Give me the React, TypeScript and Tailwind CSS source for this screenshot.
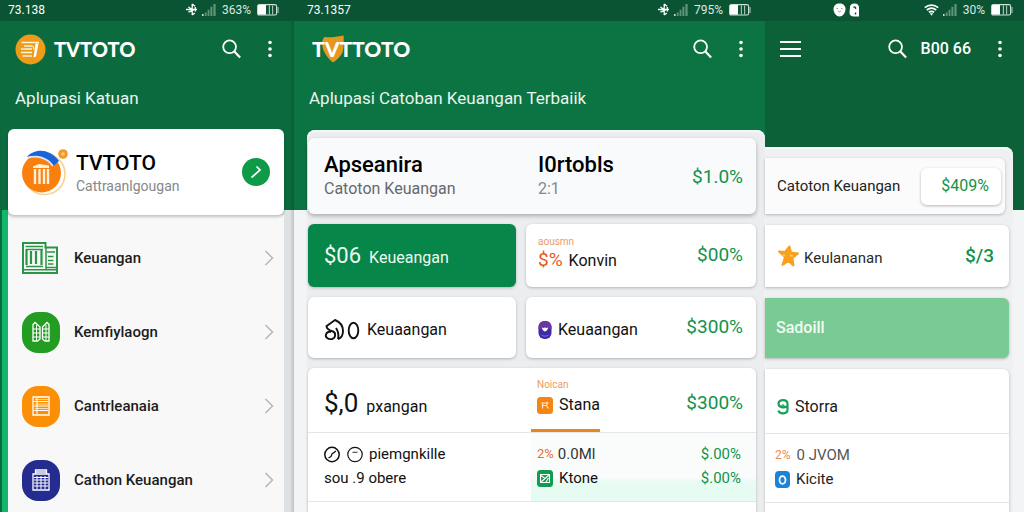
import type { ReactNode } from "react";

function Bluetooth() {
  return (
    <svg width="12" height="13" viewBox="0 0 12 13" fill="none" stroke="currentColor" strokeWidth="1.3" aria-hidden="true">
      <path d="M0 6.5h11M6.200 1v11M2.500 9.200 9.800 6M2.400 4 6.200 6.500M6.200 1l2.800 2.200M6.200 12l2.600-2M9.300 4v4.500" />
    </svg>
  );
}

function Signal() {
  return (
    <svg width="14" height="13" viewBox="0 0 14 13" aria-hidden="true">
      <path d="M0 13v-2h1.600v2z" fill="#c4dccf" />
      <path d="M2.800 13V9.400h1.800V13zM5.600 13V6.800h1.800V13zM8.400 13V3.800h2V13zM11.400 13V1h2.200v12z" fill="#5f967a" />
    </svg>
  );
}

function Battery() {
  return (
    <svg width="22" height="12" viewBox="0 0 22 12" aria-hidden="true">
      <rect x="0.600" y="0.600" width="19" height="10.400" rx="1.600" fill="none" stroke="#cfe2d7" strokeWidth="1.100" />
      <path d="M1 1h8v9.600H1z" fill="#fff" />
      <path d="M12.400 1.500v9M15.600 1.500v9M21 3v6" stroke="#a8c9b7" strokeWidth="1.100" />
    </svg>
  );
}

function Wifi() {
  return (
    <svg width="15" height="12" viewBox="0 0 15 12" fill="none" stroke="currentColor" strokeWidth="1.700" aria-hidden="true">
      <path d="M.8 3.600C4.800.3 10.200.3 14.200 3.600M2.800 6c2.800-2.200 6.600-2.200 9.400 0M4.900 8.300c1.600-1.200 3.600-1.200 5.200 0" />
      <path d="m5.700 9.300 1.800 2.400 1.800-2.400z" fill="currentColor" stroke="none" />
    </svg>
  );
}

function Notices() {
  return (
    <svg width="27" height="14" viewBox="0 0 27 14" aria-hidden="true">
      <path d="M6.500.5c3.500 0 6 2 6 5.500 0 4-3 7.500-6 7.500S.5 10 .5 6C.5 2.500 3 .5 6.500.5z" fill="#fff" />
      <path d="M5 8c1 .9 2 .9 3 0M3.500 5.500h1.500M8 5.500h1.500" stroke="#7fa791" strokeWidth="1" fill="none" />
      <path d="M17 4c0-2.200 1.800-3.500 4.500-3.500S26 2 26 4.500v9h-5c-3 0-4.500-1.500-4.500-4z" fill="#fff" />
      <path d="M20.500 4.500c1.500-1 2.500 0 2 1.500M22.500 9.500v2" stroke="#0b5131" strokeWidth="1.400" fill="none" />
    </svg>
  );
}

function SearchButton() {
  return (
    <button type="button" aria-label="Cari" className="flex text-white">
      <svg width="19" height="20" viewBox="0 0 19 20" fill="none" stroke="currentColor" strokeWidth="1.800" aria-hidden="true">
        <circle cx="7.600" cy="7.800" r="6.400" />
        <path d="m12.100 12.300 6 6.200" strokeWidth="2.200" />
      </svg>
    </button>
  );
}

function MoreButton() {
  return (
    <button type="button" aria-label="Menu lainnya" className="flex text-white">
      <svg width="6" height="18" viewBox="0 0 6 18" fill="currentColor" aria-hidden="true">
        <circle cx="3" cy="2.500" r="1.800" />
        <circle cx="3" cy="9" r="1.800" />
        <circle cx="3" cy="15.500" r="1.800" />
      </svg>
    </button>
  );
}

function StatusBar({ time, level, wifi = false }: { time: ReactNode; level: string; wifi?: boolean }) {
  return (
    <div className="flex h-[21px] shrink-0 items-center justify-between bg-[#0a5433] pb-0.5 text-[12px] text-white">
      <span>{time}</span>
      <span className="flex items-center gap-1">
        {wifi ? <Wifi /> : <Bluetooth />}
        <Signal />
        <span className="px-0.5 text-[#dbeae1]">{level}</span>
        <Battery />
      </span>
    </div>
  );
}

function Chevron() {
  return (
    <svg width="10" height="16" viewBox="0 0 10 16" fill="none" stroke="#b4b6b8" strokeWidth="1.500" aria-hidden="true">
      <path d="m1.500 1 7 7-7 7" />
    </svg>
  );
}

function LogoBadge() {
  return (
    <svg width="31" height="31" viewBox="0 0 31 31" aria-hidden="true">
      <circle cx="15.500" cy="15.500" r="15" fill="#ee9a1b" />
      <path d="M6.500 8.500h17.500M9 12h8M6 15h11M6 18.500h11M7.500 22h9.500" stroke="#fff3d8" strokeWidth="1.700" fill="none" />
      <path d="M20.500 9.500h3l-2.500 13-2.500 1z" fill="#fff" />
      <path d="M16 11.500c2.500 0 3 2 2.500 4" stroke="#fff3d8" strokeWidth="1.200" fill="none" />
    </svg>
  );
}

function AccountEmblem() {
  return (
    <svg width="46" height="47" viewBox="0 0 46 47" aria-hidden="true">
      <circle cx="22.500" cy="25" r="20.500" fill="#fff" stroke="#fbd08a" strokeWidth="1.600" />
      <circle cx="19.500" cy="24" r="19.500" fill="#fb7f0d" />
      <path d="M5 8C12-1 28-1 37 12l-6 5.500C25 9 15 5 5 8z" fill="#1d63d8" />
      <path d="M5.500 9C15 5.500 25 9 31 17" stroke="#dce9fb" strokeWidth="1.800" fill="none" />
      <path d="m11 17.500 6-2.500 10 1.500v2.500H11z" fill="#fff0d6" />
      <path d="M13 20v15M17.500 20v15M22 20v15M26 20v15" stroke="#fff0d6" strokeWidth="2.400" />
      <circle cx="41" cy="5" r="4.800" fill="#f29a23" />
      <circle cx="41" cy="5" r="1.800" fill="#fbd08a" />
    </svg>
  );
}

function LedgerIcon() {
  return (
    <svg width="36" height="32" viewBox="0 0 36 32" fill="none" stroke="#2b9447" strokeWidth="2" aria-hidden="true">
      <path d="M1 1h22.500v4.500H35V31H1z" />
      <path d="M3.500 4.500H21M4 24.500h17M1 27.800h34M24 5v22" strokeWidth="1.500" />
      <path d="M4.500 7v16M9 9v13M14 9v13M19.500 7v16" strokeWidth="2.200" />
      <path d="M4 7.500h17M25 10h8M26 14.500h5.500M26 18.500h5.500M26 22h5.500M24 25.500h10" strokeWidth="1.700" />
    </svg>
  );
}

function Tile({ className, children }: { className: string; children: ReactNode }) {
  return (
    <span className={`flex h-[41px] w-[38px] items-center justify-center rounded-[16px] ${className}`}>
      <svg width="20" height="22" viewBox="0 0 20 22" fill="none" stroke="#fff" strokeWidth="1.300" aria-hidden="true">
        {children}
      </svg>
    </span>
  );
}

function NavItem({ icon, label }: { icon: ReactNode; label: string }) {
  return (
    <li>
      <a href="#" className="flex h-[74px] items-center pr-[10px] pl-[14px]">
        <span className="flex w-[52px] shrink-0">{icon}</span>
        <span className="flex-1 text-[15px] font-medium whitespace-nowrap text-[#1c1c1c]">{label}</span>
        <Chevron />
      </a>
    </li>
  );
}

function MenuPanel() {
  return (
    <section className="flex min-w-0 flex-col bg-[linear-gradient(#0b6b3e_210px,#dfe2e4_210px)] shadow-[inset_-2px_0_3px_rgba(0,0,0,0.14)]">
      <div className="bg-[#0a5433] pr-[15px] pl-2">
        <StatusBar time="73.138" level="363%" />
      </div>
      <header className="flex h-14 items-center pr-[21px] pl-[15px]">
        <LogoBadge />
        <h1 className="ml-2 flex-1 font-['Lato',sans-serif] text-[20px] font-black text-white">TVTOTO</h1>
        <SearchButton />
        <span className="ml-[26px] flex">
          <MoreButton />
        </span>
      </header>
      <p className="h-[52px] pt-2 pl-[15px] text-[17px] leading-[26px] whitespace-nowrap text-[#e9f5ee]">Aplupasi Katuan</p>
      <div className="mr-[10px] flex flex-1 flex-col bg-[linear-gradient(90deg,#0b6b3e_2px,#12b76b_2px)] bg-[length:8px_100%] bg-[position:0_81px] bg-no-repeat pl-2">
        <div className="relative flex h-[86px] shrink-0 items-center rounded-md bg-white pr-[14px] pl-[14px] shadow-[0_2px_3px_rgba(0,0,0,0.22)]">
          <AccountEmblem />
          <div className="ml-2 flex-1">
            <h2 className="pt-1 text-[21px] leading-[24px] font-medium text-black">TVTOTO</h2>
            <p className="text-[14px] leading-[22px] text-[#85888b]">Cattraanlgougan</p>
          </div>
          <button type="button" aria-label="Buka akun" className="flex size-7 items-center justify-center rounded-full bg-[#0f9a48]">
            <svg width="12" height="14" viewBox="0 0 12 14" fill="none" stroke="#fff" strokeWidth="1.700" aria-hidden="true">
              <path d="m6.500 1.500 3.500 3.500L1.500 12.500" />
            </svg>
          </button>
        </div>
        <ul className="flex-1 bg-[#f8f8f8] pt-1.5">
          <NavItem label="Keuangan" icon={<LedgerIcon />} />
          <NavItem
            label="Kemfiylaogn"
            icon={
              <Tile className="bg-[#239c22]">
                <path d="M2 3.500 4 1.500 9 6v12l-2.500 2H2zM18 3.500 16 1.500 11.500 6v12l2.500 2h4z" />
                <path d="M2 8h7M2 12h7M2 16h7M5.500 4v16M11.500 8H18M11.500 12H18M11.500 16H18M15 4v16" strokeWidth="1" />
              </Tile>
            }
          />
          <NavItem
            label="Cantrleanaia"
            icon={
              <Tile className="bg-[#fb8f05]">
                <path d="M2 2h16v18H2z" />
                <path d="M3 6.500h14M3 11h14M3 15.500h14M6 3v16" strokeWidth="1" />
                <path d="M4 4.500h13M4 9h13M4 13.500h13" strokeWidth=".7" />
              </Tile>
            }
          />
          <NavItem
            label="Cathon Keuangan"
            icon={
              <Tile className="bg-[#242c8f]">
                <path d="M2 5h16v16H2zM4.500 5V1h11v4M4 3h12" />
                <path d="M3 8.500h14M3 11h14M3 14h14M3 17h14M6 7v13M10 7v13M14 7v13" strokeWidth="1" />
              </Tile>
            }
          />
        </ul>
      </div>
    </section>
  );
}

const card = "rounded-md bg-white shadow-[0_1px_3px_rgba(0,0,0,0.25)]";
const amount = "text-[19px] text-[#12934a]";
const split = "grid grid-cols-[218fr_230fr]";

function Keyhole() {
  return (
    <svg width="14" height="18" viewBox="0 0 14 18" aria-hidden="true">
      <rect x="0.500" width="13" height="18" rx="6" fill="#3f2aa8" />
      <path d="M.5 8V6c0-8 13-8 13 0v2z" fill="#6a35a5" />
      <path d="M4 6.500 5.500 7 7 6.500l1.500.5L10 6.500C10 9 8.500 10 7 10.500 5.500 10 4 9 4 6.500z" fill="#fff" />
      <path d="M3.500 14c2 1.500 5 1.500 7 0" stroke="#7b6bd0" fill="none" />
    </svg>
  );
}

function OrangeBadge() {
  return (
    <svg width="16" height="17" viewBox="0 0 16 17" aria-hidden="true">
      <rect width="16" height="17" rx="3.500" fill="#f58413" />
      <path d="M4.500 6h7M5.500 6v5.500M5.500 8.500h4l2 3M10 5v3" stroke="#ffe9cf" strokeWidth="1.200" fill="none" />
    </svg>
  );
}

function GreenBadge() {
  return (
    <svg width="16" height="17" viewBox="0 0 16 17" aria-hidden="true">
      <rect width="16" height="17" rx="3.500" fill="#119a50" />
      <path d="M3.500 4.500h9v8h-9zM4 12l8-7M4 5.500l4 3M9 12l2.500-4" stroke="#fff" strokeWidth="1.100" fill="none" />
    </svg>
  );
}

function KnotGlyph() {
  return (
    <svg width="36" height="24" viewBox="0 0 36 24" fill="none" stroke="#111" strokeWidth="1.900" aria-hidden="true">
      <path d="M2 8.500 11 2c5 2 8 6 8 11 0 4-2 7-5 8" />
      <path d="M2.500 8c0 3 3 4.500 6.500 5.500 3 1 3 6.500-1 7.500-4 .8-7-2-6-4.500.8-2 3-3 5-2.500M12 10c2 3 3 7 2 11" />
      <ellipse cx="29.500" cy="12.500" rx="4.800" ry="7.800" />
    </svg>
  );
}

function DialPair() {
  return (
    <svg width="40" height="17" viewBox="0 0 40 17" fill="none" stroke="#111" strokeWidth="1.500" aria-hidden="true">
      <circle cx="8" cy="8.500" r="7.200" />
      <path d="M4.500 12 7 10.500l1-2.500 4-3" strokeWidth="1.200" />
      <circle cx="31" cy="8.500" r="7.200" strokeWidth="1.200" />
      <path d="M28.500 6.500c2-1 3 .5 5-.5" strokeWidth="0.900" />
    </svg>
  );
}

function CatalogPanel() {
  return (
    <section className="flex min-w-0 flex-col bg-[linear-gradient(#0c7342_210px,#f3f4f5_210px)]">
      <div className="bg-[#0a5433] pr-[14px] pl-[13px]">
        <StatusBar time="73.1357" level="795%" />
      </div>
      <header className="flex h-14 items-center pr-[21px] pl-[18px]">
        <h2 className="relative flex-1 font-['Lato',sans-serif] text-[21px] font-black text-white">
          <svg className="absolute top-0.5 left-[9px]" width="24" height="29" viewBox="0 0 24 30" aria-hidden="true">
            <path d="M3 2C9 3 15 2 23 .5c0 6 .5 11-1 17-2 5-6 8-10 11-4-3-8-8-10-13C.5 10 0 6 3 2z" fill="#e8971d" />
          </svg>
          <span className="relative">TVTTOTO</span>
        </h2>
        <SearchButton />
        <span className="ml-[26px] flex">
          <MoreButton />
        </span>
      </header>
      <p className="h-[53px] pt-2 pl-[15px] text-[17px] leading-[26px] whitespace-nowrap text-[#e9f5ee]">
        Aplupasi Catoban Keuangan Terbaiik
      </p>
      <div className="ml-[13px] flex flex-1 flex-col gap-[10px] rounded-t-lg bg-[#ebedef] pt-2 pr-[9px] pl-px shadow-[inset_0_2px_2px_#f7f8f8]">
        <article className={`h-[76px] shrink-0 rounded-md bg-[#f9fafb] shadow-[0_2px_4px_rgba(0,0,0,0.28)] ${split}`}>
          <div className="pt-[13px] pl-4">
            <h3 className="text-[22px] leading-7 font-medium text-black">Apseanira</h3>
            <p className="text-[16px] leading-5 text-[#66696c]">Catoton Keuangan</p>
          </div>
          <div className="flex justify-between pt-[13px] pr-[13px] pl-3">
            <div>
              <h3 className="text-[22px] leading-7 font-medium text-black">I0rtobls</h3>
              <p className="text-[16px] leading-5 text-[#85888b]">2:1</p>
            </div>
            <span className={`pt-3 ${amount}`}>$1.0%</span>
          </div>
        </article>
        <div className="grid shrink-0 grid-cols-[208fr_230fr] gap-[10px]">
          <article className="flex h-[63px] items-baseline gap-2 rounded-md bg-[#07864a] pt-4 pl-4 text-[#eef9f2] shadow-[0_1px_3px_rgba(0,0,0,0.25)]">
            <span className="text-[22px] leading-8">$06</span>
            <span className="text-[16px]">Keueangan</span>
          </article>
          <article className={`flex h-[63px] items-center justify-between pr-[13px] pl-3 ${card}`}>
            <div>
              <p className="text-[10px] leading-[10px] text-[#ee9a62]">aousmn</p>
              <p className="flex items-baseline gap-1.5 text-[16px] leading-[26px] text-[#111]">
                <span className="text-[19px] text-[#e65a1c]">$%</span>
                Konvin
              </p>
            </div>
            <span className={amount}>$00%</span>
          </article>
          <article className={`flex h-[61px] items-center gap-[7px] pt-1 pl-4 text-[16px] text-[#111] ${card}`}>
            <KnotGlyph />
            <span>Keuaangan</span>
          </article>
          <article className={`flex h-[61px] items-center justify-between pr-[13px] pl-3 ${card}`}>
            <span className="flex items-center gap-1.5 pt-1 text-[16px] text-[#111]">
              <Keyhole />
              Keuaangan
            </span>
            <span className={amount}>$300%</span>
          </article>
        </div>
        <article className={`flex-1 rounded-b-none ${card}`}>
          <div className={`h-[65px] border-b border-[#e4e6e7] ${split}`}>
            <div className="flex items-baseline gap-2 pt-[19px] pl-4 text-[#111]">
              <span className="text-[26px] leading-8">$,0</span>
              <span className="text-[16px]">pxangan</span>
            </div>
            <div className="flex justify-between pr-[13px] pl-[5px]">
              <div className="flex flex-col justify-between border-b-3 border-[#e8871f] pl-1.5">
                <p className="pt-3 text-[10px] leading-[10px] text-[#ee9a62]">Noican</p>
                <p className="flex items-center gap-1.5 pb-3 text-[16px] leading-6 text-[#111]">
                  <OrangeBadge />
                  Stana
                </p>
              </div>
              <span className={`self-center pt-1.5 ${amount}`}>$300%</span>
            </div>
          </div>
          <div className={`h-[69px] border-b border-[#e4e6e7] ${split}`}>
            <div className="pt-[9px] pl-4 text-[15px] leading-6 text-[#111]">
              <p className="flex items-center gap-[5px]">
                <DialPair />
                piemgnkille
              </p>
              <p>sou .9 obere</p>
            </div>
            <div className="ml-[5px] bg-[linear-gradient(#fafcfb_44px,#e6fbf1_50px)] pt-[9px] pr-[15px] pl-1.5 text-[15px] leading-6">
              <p className="flex justify-between text-[#333]">
                <span className="flex items-center gap-1">
                  <span className="text-[13px] text-[#e6713c]">2%</span>
                  0.0Ml
                </span>
                <span className="text-[#12934a]">$.00%</span>
              </p>
              <p className="flex justify-between text-[#111]">
                <span className="flex items-center gap-1.5">
                  <GreenBadge />
                  Ktone
                </span>
                <span className="text-[#12934a]">$.00%</span>
              </p>
            </div>
          </div>
        </article>
      </div>
    </section>
  );
}

function AccountPanel() {
  return (
    <section className="flex min-w-0 flex-col bg-[linear-gradient(#0c6139_210px,#f3f4f5_210px)]">
      <div className="bg-[#0a5433] pr-[11px]">
        <StatusBar time={<span className="ml-[68px] flex"><Notices /></span>} level="30%" wifi />
      </div>
      <header className="flex h-14 items-center pr-[21px] pl-[15px] text-white">
        <button type="button" aria-label="Buka menu" className="flex">
          <svg width="21" height="18" viewBox="0 0 21 18" stroke="currentColor" strokeWidth="2" aria-hidden="true">
            <path d="M0 2h21M0 9h21M0 16h21" />
          </svg>
        </button>
        <span className="ml-auto flex">
          <SearchButton />
        </span>
        <span className="ml-[14px] text-[16px] font-medium whitespace-nowrap">B00 66</span>
        <span className="ml-[26px] flex">
          <MoreButton />
        </span>
      </header>
      <div className="mt-[70px] mr-[11px] flex flex-1 flex-col gap-[11px] rounded-tr-lg bg-[#eff0f1] pt-[11px] pr-1 shadow-[inset_0_2px_2px_#f7f8f8]">
        <article className="mr-1 flex h-14 shrink-0 items-center justify-between rounded-r-md bg-[#fbfbfb] pr-1 pl-3 shadow-[0_1px_3px_rgba(0,0,0,0.25)]">
          <span className="text-[15px] whitespace-nowrap text-[#222]">Catoton Keuangan</span>
          <button type="button" className="h-[37px] rounded-md bg-white pr-3 pl-5 text-[16px] text-[#12934a] shadow-[0_1px_3px_rgba(0,0,0,0.28)]">
            $409%
          </button>
        </article>
        <article className="flex h-[62px] shrink-0 items-center rounded-r-md bg-white pr-[15px] pl-3 shadow-[0_1px_3px_rgba(0,0,0,0.25)]">
          <svg width="23" height="22" viewBox="0 0 23 22" aria-hidden="true">
            <path
              d="M2 6.500 8 7l4.500-5.500L14 7.500l7 1-5.500 4.500 1 7.500-5-4.500-6 4 2.500-8z"
              fill="#f9a11b"
              stroke="#f9a11b"
              strokeWidth="2"
              strokeLinejoin="round"
            />
            <path d="M13 10.500l3 .5M6 10l2 .5" stroke="#fdd28a" strokeWidth="1.300" />
          </svg>
          <span className="ml-1 flex-1 pt-1 text-[15px] text-[#2a2a2a]">Keulananan</span>
          <span className="text-[19px] font-medium text-[#12934a]">$/3</span>
        </article>
        <button type="button" className="h-[60px] shrink-0 rounded-r-md bg-[#7acb93] pl-[11px] text-left text-[16px] font-medium text-[#f1fbf4] shadow-[0_1px_3px_rgba(0,0,0,0.25)]">
          Sadoill
        </button>
        <article className="flex-1 rounded-tr-md bg-white shadow-[0_1px_3px_rgba(0,0,0,0.25)]">
          <div className="flex h-[65px] items-center gap-1.5 border-b border-[#e4e6e7] pt-3 pl-3 text-[16px] text-[#1b1b1b]">
            <svg width="12" height="16" viewBox="0 0 12 16" fill="none" stroke="#17a05a" strokeWidth="2.200" aria-hidden="true">
              <path d="M1.500 11.500c1 4 9 4 9-1V5c0-5-9-5-9-.5 0 4 5 4.500 8.500 3" />
              <circle cx="6" cy="7" r="0.600" />
            </svg>
            Storra
          </div>
          <div className="h-[69px] border-b border-[#e4e6e7] pt-[9px] pl-[10px] text-[15px] leading-6 text-[#222]">
            <p className="flex items-center gap-1.5 text-[#555]">
              <span className="text-[12px] text-[#ee8a55]">2%</span>
              0 JVOM
            </p>
            <p className="flex items-center gap-1.5">
              <svg width="15" height="17" viewBox="0 0 15 17" aria-hidden="true">
                <rect width="15" height="17" rx="4" fill="#1c84d8" />
                <ellipse cx="7.500" cy="9" rx="3" ry="3.800" fill="none" stroke="#fff" strokeWidth="1.800" />
              </svg>
              Kicite
            </p>
          </div>
        </article>
      </div>
    </section>
  );
}

export default function App() {
  return (
    <main className="grid h-screen min-h-[512px] grid-cols-[294fr_471fr_259fr] overflow-hidden font-['Roboto',sans-serif]">
      <MenuPanel />
      <CatalogPanel />
      <AccountPanel />
    </main>
  );
}
